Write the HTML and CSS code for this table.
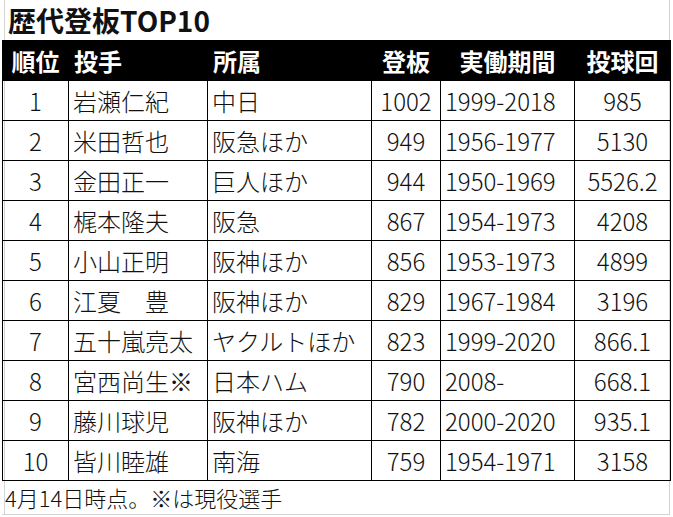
FILE: index.html
```html
<!DOCTYPE html>
<html lang="ja">
<head>
<meta charset="utf-8">
<title>歴代登板TOP10</title>
<link rel="stylesheet" href="styles.css">
</head>
<body>
<div class="sheet">
  <div class="title">歴代登板TOP10</div>
  <table class="rank">
    <colgroup>
      <col class="c-rank"><col class="c-name"><col class="c-team"><col class="c-games"><col class="c-period"><col class="c-ip">
    </colgroup>
    <thead>
      <tr>
        <th>順位</th><th class="l">投手</th><th class="l">所属</th><th>登板</th><th>実働期間</th><th>投球回</th>
      </tr>
    </thead>
    <tbody>
      <tr><td>1</td><td class="l">岩瀬仁紀</td><td class="l">中日</td><td>1002</td><td class="l">1999-2018</td><td>985</td></tr>
      <tr><td>2</td><td class="l">米田哲也</td><td class="l">阪急ほか</td><td>949</td><td class="l">1956-1977</td><td>5130</td></tr>
      <tr><td>3</td><td class="l">金田正一</td><td class="l">巨人ほか</td><td>944</td><td class="l">1950-1969</td><td>5526.2</td></tr>
      <tr><td>4</td><td class="l">梶本隆夫</td><td class="l">阪急</td><td>867</td><td class="l">1954-1973</td><td>4208</td></tr>
      <tr><td>5</td><td class="l">小山正明</td><td class="l">阪神ほか</td><td>856</td><td class="l">1953-1973</td><td>4899</td></tr>
      <tr><td>6</td><td class="l">江夏　豊</td><td class="l">阪神ほか</td><td>829</td><td class="l">1967-1984</td><td>3196</td></tr>
      <tr><td>7</td><td class="l">五十嵐亮太</td><td class="l">ヤクルトほか</td><td>823</td><td class="l">1999-2020</td><td>866.1</td></tr>
      <tr><td>8</td><td class="l">宮西尚生※</td><td class="l">日本ハム</td><td>790</td><td class="l">2008-</td><td>668.1</td></tr>
      <tr><td>9</td><td class="l">藤川球児</td><td class="l">阪神ほか</td><td>782</td><td class="l">2000-2020</td><td>935.1</td></tr>
      <tr><td>10</td><td class="l">皆川睦雄</td><td class="l">南海</td><td>759</td><td class="l">1954-1971</td><td>3158</td></tr>
    </tbody>
  </table>
  <div class="note">4月14日時点。※は現役選手</div>
</div>
</body>
</html>
```

FILE: styles.css
```css
html, body {
  margin: 0;
  padding: 0;
  background: #ffffff;
}

body {
  font-family: "Noto Sans CJK JP", "Noto Sans", sans-serif;
  color: #111111;
}

.sheet {
  width: 668px;
  margin-left: 2px;
  height: 515px;
  box-sizing: border-box;
  border-right: 1px solid #d4d4d4;
  border-bottom: 1px solid #d4d4d4;
  box-shadow: inset 2px 0 0 #ffffff, inset 3px 0 0 #d4d4d4;
}

.title {
  height: 38px;
  padding-top: 2px;
  line-height: 36px;
  padding-left: 6px;
  font-size: 28px;
  font-weight: 700;
  color: #111111;
}

.rank {
  border-collapse: collapse;
  table-layout: fixed;
  width: 668px;
}

.c-rank { width: 66px; }
.c-name { width: 139px; }
.c-team { width: 164px; }
.c-games { width: 69px; }
.c-period { width: 134px; }
.c-ip { width: 96px; }

.rank tr {
  height: 40px;
}

.rank th {
  background: #000000;
  color: #ffffff;
  font-size: 24px;
  font-weight: 700;
  line-height: 36px;
  text-align: center;
  padding: 0;
  white-space: nowrap;
  border: 1px solid #000000;
}

.rank td {
  border: 1px solid #000000;
  font-size: 24px;
  font-weight: 300;
  text-align: center;
  padding: 0;
  white-space: nowrap;
  line-height: 36px;
}

.rank th.l {
  text-align: left;
  padding-left: 5px;
}

.rank td.l {
  text-align: left;
  padding-left: 4px;
}

.note {
  height: 34px;
  line-height: 32px;
  padding-left: 3px;
  font-size: 22px;
  font-weight: 300;
}
```
